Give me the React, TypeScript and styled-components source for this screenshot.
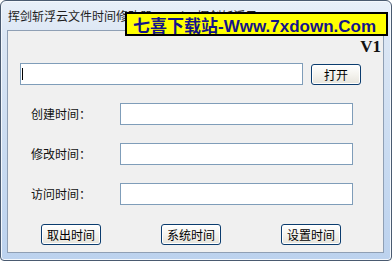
import React from "react";
import styled, { createGlobalStyle } from "styled-components";

const GlobalStyle = createGlobalStyle`
  html, body {
    margin: 0;
    padding: 0;
    background: #ffffff;
  }
  body {
    font-family: "Noto Sans CJK SC", "DejaVu Sans", sans-serif;
  }
`;

const Window = styled.div`
  position: relative;
  box-sizing: border-box;
  width: 392px;
  height: 261px;
  border: 1px solid #4a5a70;
  border-radius: 6px 6px 4px 4px;
  background: linear-gradient(180deg, #e9f0f9 0%, #dbe6f4 14%, #c9dbf1 60%, #bcd2ee 100%);
  box-shadow: inset 0 0 0 1px #f4f8fd;
  display: flex;
  flex-direction: column;
  overflow: hidden;
`;

const TitleBar = styled.div`
  height: 29px;
  display: flex;
  align-items: center;
  padding-left: 7px;
  font-size: 12px;
  line-height: 12px;
  color: #1e1e1e;
  white-space: nowrap;
`;

const Client = styled.div`
  flex: 1;
  margin: 0 7px 7px 6px;
  border: 1px solid #8f9fb4;
  background: #f0f0f0;
  display: flex;
  flex-direction: column;
`;

const VersionRow = styled.div`
  height: 24px;
  display: flex;
  justify-content: flex-end;
  align-items: flex-end;
  padding-right: 2px;
  font-family: "Liberation Serif", "Times New Roman", serif;
  font-weight: bold;
  font-size: 17px;
  line-height: 17px;
  color: #111;
`;

const Row = styled.div<{ $top: number; $left: number }>`
  display: flex;
  align-items: center;
  margin-top: ${(p) => p.$top}px;
  padding-left: ${(p) => p.$left}px;
`;

const TextBox = styled.div<{ $width: number }>`
  box-sizing: border-box;
  width: ${(p) => p.$width}px;
  height: 22px;
  border: 1px solid #7f9db9;
  background: #ffffff;
  display: flex;
  align-items: center;
  padding-left: 1px;
`;

const Caret = styled.span`
  width: 1px;
  height: 12px;
  background: #000;
`;

const Label = styled.div`
  width: 89px;
  font-size: 12px;
  color: #111;
  line-height: 22px;
`;

const Button = styled.button<{ $width?: number }>`
  box-sizing: border-box;
  width: ${(p) => p.$width ?? 60}px;
  height: 21px;
  padding: 0;
  border: 1px solid #0b3c6e;
  border-radius: 3px;
  background: linear-gradient(180deg, #ffffff 0%, #f4f3ee 50%, #e6e4dc 100%);
  box-shadow: inset 0 0 0 1px #ffffff;
  font-family: "Noto Sans CJK SC", "DejaVu Sans", sans-serif;
  font-size: 12px;
  line-height: 19px;
  color: #000;
`;

const ButtonRow = styled.div`
  display: flex;
  gap: 60px;
  margin-top: 19px;
  padding-left: 33px;
`;

const Banner = styled.div`
  position: absolute;
  left: 124px;
  top: 11px;
  width: 263px;
  height: 24px;
  box-sizing: border-box;
  border: 2px solid #000;
  background: #ffff00;
  display: flex;
  align-items: center;
  padding-left: 6px;
  font-family: "Liberation Sans", "Noto Sans CJK SC", Arial, sans-serif;
  font-weight: bold;
  font-size: 17px;
  color: #14148a;
  white-space: nowrap;
`;

const fields = ["创建时间：", "修改时间：", "访问时间："];

export default function App() {
  return (
    <>
      <GlobalStyle />
      <Window>
        <TitleBar>挥剑斩浮云文件时间修改器 V1.0 by 挥剑斩浮云</TitleBar>
        <Client>
          <VersionRow>V1</VersionRow>
          <Row $top={8} $left={12}>
            <TextBox $width={283}>
              <Caret />
            </TextBox>
            <Button $width={50} style={{ marginLeft: 8 }}>打开</Button>
          </Row>
          {fields.map((f) => (
            <Row key={f} $top={18} $left={23}>
              <Label>{f}</Label>
              <TextBox $width={233} />
            </Row>
          ))}
          <ButtonRow>
            <Button>取出时间</Button>
            <Button>系统时间</Button>
            <Button>设置时间</Button>
          </ButtonRow>
        </Client>
        <Banner>七喜下载站-Www.7xdown.Com</Banner>
      </Window>
    </>
  );
}
